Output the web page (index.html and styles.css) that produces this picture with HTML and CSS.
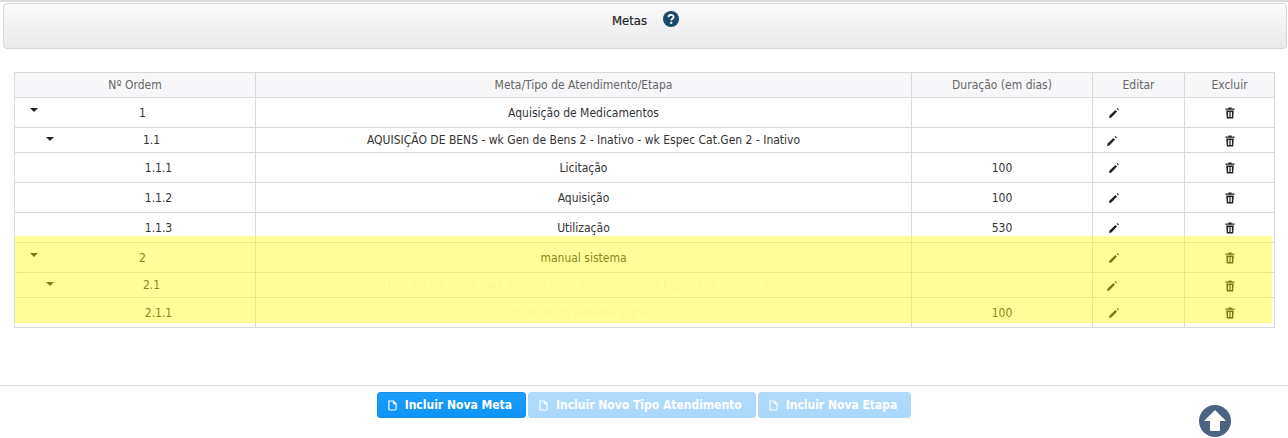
FILE: index.html
```html
<!DOCTYPE html>
<html lang="en">

<head>
    <meta charset="UTF-8">
    <meta name="viewport" content="width=device-width, initial-scale=1.0">
    <title>Metas</title>
    <link rel="stylesheet" href="styles.css">
</head>

<body>
    <svg class="sprites" width="0" height="0">
        <symbol id="i-pencil" viewBox="0 0 12 12">
            <path d="M1 11 L1.6 8.6 L7.4 3 L9 4.6 L3.4 10.4 Z" fill="currentColor"/>
            <path d="M8.6 1.8 L9.4 1.1 L10.9 2.6 L10.2 3.4 Z" fill="currentColor"/>
        </symbol>
        <symbol id="i-trash" viewBox="0 0 12 12">
            <path d="M4.4 1.6 V0.6 H7.6 V1.6 H10.6 V2.8 H1.4 V1.6 Z" fill="currentColor"/>
            <path d="M2.2 3.6 H9.8 L9.2 11.4 H2.8 Z M4 5 V10 H4.9 V5 Z M5.6 5 V10 H6.4 V5 Z M7.1 5 V10 H8 V5 Z" fill="currentColor" fill-rule="evenodd"/>
        </symbol>
        <symbol id="i-file" viewBox="0 0 10 12">
            <path d="M1 1 H6 L9 4 V10 Q9 11 8 11 H2 Q1 11 1 10 Z M6 1 V4 H9" fill="none" stroke="currentColor" stroke-width="1.3"/>
        </symbol>
    </svg>

    <div class="page">
        <div class="panel-header">
            <span class="panel-title">Metas</span>
            <svg class="help-icon" viewBox="0 0 16 16">
                <circle cx="8" cy="8" r="8" fill="#1c4966"/>
                <path d="M5.5 6.2 C5.5 3.2 10.6 3.2 10.6 6 C10.6 7.8 8.2 7.8 8.2 9.6" fill="none" stroke="#fff" stroke-width="1.8"/>
                <rect x="7.2" y="10.8" width="2" height="2" fill="#fff"/>
            </svg>
        </div>

        <div class="table-wrap">
            <table class="goals">
                <thead>
                    <tr>
                        <th class="col-order">Nº Ordem</th>
                        <th>Meta/Tipo de Atendimento/Etapa</th>
                        <th class="col-days">Duração (em dias)</th>
                        <th class="col-edit">Editar</th>
                        <th class="col-delete">Excluir</th>
                    </tr>
                </thead>
                <tbody>
                    <tr class="row-tall">
                        <td><div class="tree level-0"><span class="toggler"></span><span class="tree-num">1</span></div></td>
                        <td>Aquisição de Medicamentos</td>
                        <td></td>
                        <td><svg class="icon pencil"><use href="#i-pencil"/></svg></td>
                        <td><svg class="icon"><use href="#i-trash"/></svg></td>
                    </tr>
                    <tr class="row-short">
                        <td><div class="tree level-1"><span class="toggler"></span><span class="tree-num">1.1</span></div></td>
                        <td>AQUISIÇÃO DE BENS - wk Gen de Bens 2 - Inativo - wk Espec Cat.Gen 2 - Inativo</td>
                        <td></td>
                        <td><svg class="icon pencil nudge"><use href="#i-pencil"/></svg></td>
                        <td><svg class="icon"><use href="#i-trash"/></svg></td>
                    </tr>
                    <tr class="row-tall">
                        <td><div class="tree level-2"><span class="tree-num">1.1.1</span></div></td>
                        <td>Licitação</td>
                        <td>100</td>
                        <td><svg class="icon pencil"><use href="#i-pencil"/></svg></td>
                        <td><svg class="icon"><use href="#i-trash"/></svg></td>
                    </tr>
                    <tr class="row-tall">
                        <td><div class="tree level-2"><span class="tree-num">1.1.2</span></div></td>
                        <td>Aquisição</td>
                        <td>100</td>
                        <td><svg class="icon pencil"><use href="#i-pencil"/></svg></td>
                        <td><svg class="icon"><use href="#i-trash"/></svg></td>
                    </tr>
                    <tr class="row-tall">
                        <td><div class="tree level-2"><span class="tree-num">1.1.3</span></div></td>
                        <td>Utilização</td>
                        <td>530</td>
                        <td><svg class="icon pencil"><use href="#i-pencil"/></svg></td>
                        <td><svg class="icon"><use href="#i-trash"/></svg></td>
                    </tr>
                    <tr class="row-tall">
                        <td><div class="tree level-0"><span class="toggler"></span><span class="tree-num">2</span></div></td>
                        <td>manual sistema</td>
                        <td></td>
                        <td><svg class="icon pencil"><use href="#i-pencil"/></svg></td>
                        <td><svg class="icon"><use href="#i-trash"/></svg></td>
                    </tr>
                    <tr class="row-short">
                        <td><div class="tree level-1"><span class="toggler"></span><span class="tree-num">2.1</span></div></td>
                        <td class="faded">AQUISIÇÃO DE BENS - wk Gen de Bens 2 - Inativo - wk Espec Cat.Gen 2 - Inativo</td>
                        <td></td>
                        <td><svg class="icon pencil nudge"><use href="#i-pencil"/></svg></td>
                        <td><svg class="icon"><use href="#i-trash"/></svg></td>
                    </tr>
                    <tr class="row-tall">
                        <td><div class="tree level-2"><span class="tree-num">2.1.1</span></div></td>
                        <td class="faded">manual do sistema sigcon</td>
                        <td>100</td>
                        <td><svg class="icon pencil"><use href="#i-pencil"/></svg></td>
                        <td><svg class="icon"><use href="#i-trash"/></svg></td>
                    </tr>
                </tbody>
            </table>
            <div class="highlight"></div>
        </div>

        <div class="actions">
            <button class="btn"><svg class="btn-icon"><use href="#i-file"/></svg>Incluir Nova Meta</button>
            <button class="btn btn-off"><svg class="btn-icon"><use href="#i-file"/></svg>Incluir Novo Tipo Atendimento</button>
            <button class="btn btn-off"><svg class="btn-icon"><use href="#i-file"/></svg>Incluir Nova Etapa</button>
        </div>

        <svg class="to-top" viewBox="0 0 32 32">
            <circle cx="16" cy="16" r="16" fill="#4b6280"/>
            <path d="M16 5 L27 16 H21 V25 Q21 26 20 26 H12 Q11 26 11 25 V16 H5 Z" fill="#fff"/>
        </svg>
    </div>
</body>

</html>
```

FILE: styles.css
```css
* {
    box-sizing: border-box;
}

html,
body {
    height: 100%;
}

body {
    margin: 0;
    overflow: hidden;
    background-color: #ffffff;
    color: #333;
    font-family: "DejaVu Sans Condensed", "DejaVu Sans", sans-serif;
    font-stretch: condensed;
    font-size: 12px;
}

.sprites {
    position: absolute;
}

.page {
    position: relative;
    height: 438px;
    padding-top: 1px;
    border-top: 2px solid #dcdcdc;
    overflow: hidden;
}

.panel-header {
    display: flex;
    justify-content: center;
    gap: 16px;
    height: 46px;
    margin: 0 1px 0 3px;
    padding: 7px 0 0 1px;
    background: linear-gradient(to bottom, #fafafb, #eaeaec);
    border: 1px solid #d6d6d6;
    border-radius: 4px;
}

.panel-title {
    margin-top: 2px;
    font-size: 13px;
    color: #222;
    -webkit-text-stroke: 0.2px #222;
}

.help-icon {
    width: 16px;
    height: 16px;
}

.table-wrap {
    position: relative;
    margin: 23px 13px 0 14px;
}

.goals {
    width: 100%;
    table-layout: fixed;
    border-collapse: collapse;
    border: 1px solid #dadada;
}

.goals th,
.goals td {
    padding: 0;
    border: 1px solid #dadada;
    text-align: center;
    font-weight: normal;
}

.goals th {
    height: 25px;
    background-color: #f7f7f9;
    color: #666;
}

.col-order {
    width: 241px;
}

.col-days {
    width: 181px;
}

.col-edit {
    width: 92px;
}

.col-delete {
    width: 90px;
}

.row-tall td {
    height: 30px;
}

.row-short td {
    height: 25px;
}

.faded {
    color: #f8f8f6;
}

.tree {
    display: flex;
    align-items: center;
}

.tree-num {
    flex: 1;
}

.level-0 {
    padding-left: 15px;
}

.level-1 {
    padding-left: 33px;
}

.level-2 {
    padding-left: 47px;
}

/* takes no room, so the number stays centred on the indent */
.toggler {
    width: 0;
    height: 0;
    margin: -6px -8px 0 0;
    border-style: solid;
    border-width: 4px 4px 0 4px;
    border-color: #222 transparent transparent transparent;
}

.level-1 .toggler {
    margin: -3px -6px 0 -2px;
}

.icon {
    display: block;
    width: 12px;
    height: 12px;
    margin: 1px auto 0;
    color: #222;
}

.pencil {
    margin-left: 15px;
}

.nudge {
    margin-left: 13px;
}

.highlight {
    position: absolute;
    top: 164px;
    left: 1px;
    right: 3px;
    height: 87px;
    background-color: rgba(255, 255, 0, 0.4);
}

.actions {
    display: flex;
    justify-content: center;
    gap: 2px;
    margin-top: 57px;
    padding-top: 6px;
    border-top: 1px solid #dcdcdc;
}

.btn {
    display: flex;
    align-items: center;
    height: 26px;
    padding: 0 13px 0 10px;
    background: linear-gradient(to bottom, #1e9dfa, #0d93f7);
    border: 1px solid #1a8fe8;
    border-radius: 3px;
    color: #fff;
    font-family: inherit;
    font-stretch: condensed;
    font-size: 12px;
    font-weight: bold;
}

.btn-off {
    opacity: 0.35;
}

.btn-icon {
    width: 9px;
    height: 11px;
    margin-right: 8px;
}

.to-top {
    position: absolute;
    left: 1199px;
    top: 403px;
    width: 32px;
    height: 32px;
}
```
